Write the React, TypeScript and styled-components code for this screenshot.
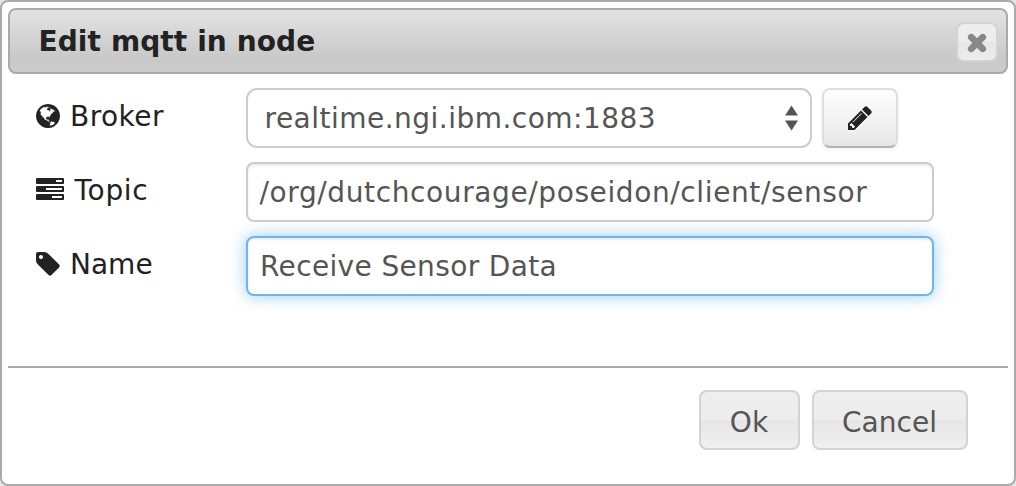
import React from "react";
import styled, { createGlobalStyle } from "styled-components";

const GlobalStyle = createGlobalStyle`
  *, *::before, *::after { box-sizing: border-box; }
  html, body { margin: 0; padding: 0; }
  body {
    background: #e6e6e6;
    font-family: Verdana, "DejaVu Sans", sans-serif;
    font-size: 28px;
    line-height: 36px;
    color: #222;
  }
`;

const Dialog = styled.section`
  width: 1016px;
  height: 486px;
  padding: 6px;
  border: 2px solid #aaa;
  border-radius: 8px;
  background: #fff;
  display: flex;
  flex-direction: column;
`;

const TitleBar = styled.header`
  height: 66px;
  flex: none;
  display: flex;
  align-items: center;
  justify-content: space-between;
  padding: 0 8px 0 28.5px;
  border: 2px solid #aaa;
  border-radius: 8px;
  background: linear-gradient(#e3e3e3 0%, #c9c9c9 76%, #cccccc 100%);
`;

const Title = styled.h1`
  margin: 0;
  padding-top: 2px;
  font-size: 28px;
  line-height: 36px;
  font-weight: bold;
  letter-spacing: 0.1px;
`;

const CloseButton = styled.button`
  width: 42px;
  height: 40px;
  margin-top: 2px;
  padding: 2px 0 0;
  display: flex;
  align-items: center;
  justify-content: center;
  border: 2px solid #d3d3d3;
  border-radius: 8px;
  background: linear-gradient(#ededed 0%, #ededed 50%, #e6e6e6 51%, #ececec 100%);
`;

const Form = styled.form`
  flex: none;
  height: 292px;
  padding: 14px 0 0 28px;
  display: flex;
  flex-direction: column;
  gap: 14px;
`;

const Row = styled.div`
  height: 60px;
  display: flex;
  align-items: stretch;
`;

const Label = styled.label`
  width: 210px;
  height: 56px;
  display: flex;
  align-items: center;
`;

const LabelText = styled.span<{ $gap: number; $spacing: number }>`
  margin-left: ${(p) => p.$gap}px;
  padding-top: 2px;
  letter-spacing: ${(p) => p.$spacing}px;
`;

const Field = styled.div<{ $focused?: boolean; $width: number; $radius?: number; $inset?: boolean }>`
  width: ${(p) => p.$width}px;
  display: flex;
  align-items: center;
  justify-content: space-between;
  padding: 0 12px 0 11px;
  color: #555;
  background: #fff;
  border: 2px solid ${(p) => (p.$focused ? "#6fb5f1" : "#ccc")};
  border-radius: ${(p) => p.$radius ?? 8}px;
  box-shadow: ${(p) =>
    p.$focused
      ? "inset 0 2px 2px rgba(0,0,0,0.075), 0 0 16px rgba(82,168,236,0.6)"
      : p.$inset
        ? "inset 0 2px 2px rgba(0,0,0,0.075)"
        : "none"};
`;

const Value = styled.span<{ $indent?: number; $spacing: number }>`
  margin-left: ${(p) => p.$indent ?? 0}px;
  padding-top: 2px;
  letter-spacing: ${(p) => p.$spacing}px;
  white-space: nowrap;
`;

const EditButton = styled.button`
  width: 76px;
  margin-left: 10px;
  padding: 0;
  display: flex;
  align-items: center;
  justify-content: center;
  border: 2px solid #dedede;
  border-bottom-color: #b3b3b3;
  border-radius: 8px;
  background: linear-gradient(#ffffff, #e6e6e6);
  box-shadow: 0 2px 4px rgba(0, 0, 0, 0.05);
`;

const ButtonPane = styled.footer`
  flex: 1;
  display: flex;
  justify-content: flex-end;
  align-items: flex-start;
  gap: 12px;
  padding: 22px 40px 0 0;
  border-top: 2px solid #aaa;
`;

const PaneButton = styled.button<{ $width: number }>`
  width: ${(p) => p.$width}px;
  height: 60px;
  padding: 5px 1px 0 0;
  font: inherit;
  color: #555;
  border: 2px solid #d3d3d3;
  border-radius: 8px;
  background: linear-gradient(#eeeeee 0%, #ededed 50%, #e6e6e6 51%, #f0f0f0 100%);
`;

const Glyph = styled.svg`
  display: block;
  flex: none;
  fill: currentColor;
`;

const PencilGlyph = styled(Glyph)`
  color: #222;
  filter: drop-shadow(0 2px 1px rgba(255, 255, 255, 0.75));
`;

const GlobeIcon = () => (
  <Glyph width="24" height="28" viewBox="128 0 1536 1792">
    <path d="M896 128q209 0 385.5 103t279.5 279.5 103 385.5-103 385.5-279.5 279.5-385.5 103-385.5-103-279.5-279.5-103-385.5 103-385.5 279.5-279.5 385.5-103zm274 521q-2 1-9.5 9.5t-13.5 9.5q2 0 4.5-5t5-11 3.5-7q6-7 22-15 14-6 52-12 34-8 51 11-2-2 9.5-13t14.5-12q3-2 15-4.5t15-7.5l2-22q-12 1-17.5-7t-6.5-21q0 2-6 8 0-7-4.5-8t-11.5 1-9 1q-10-3-15-7.5t-8-16.5-4-15q-2-5-9.5-11t-9.5-10q-1-2-2.5-5.5t-3-6.5-4-5.5-5.5-2.5-7 5-7.5 10-4.5 5q-3-2-6-1.5t-4.5 1-4.5 3-5 3.5q-3 2-8.5 3t-8.5 2q15-5-1-11-10-4-16-3 9-4 7.5-12t-8.5-14h5q-1-4-8.5-8.5t-17.5-8.5-13-6q-8-5-34-9.5t-33-.5q-5 6-4.5 10.5t4 14 3.5 12.5q1 6-5.5 13t-6.5 12q0 7 14 15.5t10 21.5q-3 8-16 16t-16 12q-5 8-1.5 18.5t10.5 16.5q2 2 1.5 4t-3.5 4.5-5.5 4-6.5 3.5l-3 2q-11 5-20.5-6t-13.5-26q-7-25-16-30-23-8-29 1-5-13-41-26-25-9-58-4 6-1 0-15-7-15-19-12 3-6 4-17.5t1-13.5q3-13 12-23 1-1 7-8.5t9.5-13.5.5-6q35 4 50-11 5-5 11.5-17t10.5-17q9-6 14-5.5t14.5 5.5 14.5 5q14 1 15.5-11t-7.5-20q12 1 3-17-4-7-8-9-12-4-27 5-8 4 2 8-1-1-9.5 10.5t-16.5 17.5-16-5q-1-1-5.5-13.5t-9.5-13.5q-8 0-16 15 3-8-11-15t-24-8q19-12-8-27-7-4-20.5-5t-19.5 4q-5 7-5.5 11.5t5 8 10.5 5.5 11.5 4 8.5 3q14 10 8 14-2 1-8.5 3.5t-11.5 4.5-6 4q-3 4 0 14t-2 14q-5-5-9-17.5t-7-16.5q7 9-25 6l-10-1q-4 0-16 2t-20.5 1-13.5-8q-4-8 0-20 1-4 4-2-4-3-11-9.5t-10-8.5q-46 15-94 41 6 1 12-1 5-2 13-6.5t10-5.5q34-14 42-7l5-5q14 16 20 25-7-4-30-1-20 6-22 12 7 12 5 18-4-3-11.5-10t-14.5-11-15-5q-16 0-22 1-146 80-235 222 7 7 12 8 4 1 5 9t2.5 11 11.5-3q9 8 3 19 1-1 44 27 19 17 21 21 3 11-10 18-1-2-9-9t-9-4q-3 5 .5 18.5t10.5 12.5q-7 0-9.5 16t-2.5 35.5-1 23.5l2 1q-3 12 5.5 34.5t21.5 19.5q-13 3 20 43 6 8 8 9 3 2 12 7.5t15 10 10 10.5q4 5 10 22.5t14 23.5q-2 6 9.5 20t10.5 23q-1 0-2.5 1t-2.5 1q3 7 15.5 14t15.5 13q1 3 2 10t3 11 8 2q2-20-24-62-15-25-17-29-3-5-5.5-15.5t-4.5-14.5q2 0 6 1.5t8.5 3.5 7.5 4 2 3q-3 7 2 17.5t12 18.5 17 19 12 13q6 6 14 19.5t0 13.5q9 0 20 10.5t17 19.5q5 8 8 26t5 24q2 7 8.5 13.5t12.5 9.5l16 8 13 7q5 2 18.5 10.5t21.5 11.5q10 4 16 4t14.5-2.5 13.5-3.5q15-2 29 15t21 21q36 19 55 11-2 1 .5 7.5t8 15.5 9 14.5 5.5 8.5q5 6 18 15t18 15q6-4 7-9-3 8 7 20t18 10q14-3 14-32-31 15-49-18 0-1-2.5-5.5t-4-8.5-2.5-8.5 0-7.5 5-3q9 0 10-3.5t-2-12.5-4-13q-1-8-11-20t-12-15q-5 9-16 8t-16-9q0 1-1.5 5.5t-1.5 6.5q-13 0-15-1 1-3 2.5-17.5t3.5-22.5q1-4 5.5-12t7.5-14.5 4-12.5-4.5-9.5-17.5-2.5q-19 1-26 20-1 3-3 10.5t-5 11.5-9 7q-7 3-24 2t-24-5q-13-8-22.5-29t-9.5-37q0-10 2.5-26.5t3-25-5.5-24.5q3-2 9-9.5t10-10.5q2-1 4.5-1.5t4.5 0 4-1.5 3-6q-1-1-4-3-3-3-4-3 7 3 28.5-1.5t27.5 1.5q15 11 22-2 0-1-2.5-9.5t-.5-13.5q5 27 29 9 3 3 15.5 5t17.5 5q3 2 7 5.5t5.5 4.5 5-.5 8.5-6.5q10 14 12 24 11 40 19 44 7 3 11 2t4.5-9.5 0-14-1.5-12.5l-1-8v-18l-1-8q-15-3-18.5-12t1.5-18.5 15-18.5q1-1 8-3.5t15.5-6.5 12.5-8q21-19 15-35 7 0 11-9-1 0-5-3t-7.5-5-4.5-2q9-5 2-16 5-3 7.5-11t7.5-10q9 12 21 2 7-8 1-16 5-7 20.5-10.5t18.5-9.5q7 2 8-2t1-12 3-12q4-5 15-9t13-5l17-11q3-4 0-4 18 2 31-11 10-11-6-20 3-6-3-9.5t-15-5.5q3-1 11.5-.5t10.5-1.5q15-10-7-16-17-5-43 12zm-163 877q206-36 351-189-3-3-12.5-4.5t-12.5-3.5q-18-7-24-8 1-7-2.5-13t-8-9-12.5-8-11-7q-2-2-7-6t-7-5.5-7.5-4.5-8.5-2-10 1l-3 1q-3 1-5.5 2.5t-5.5 3-4 3 0 2.5q-21-17-36-22-5-1-11-5.5t-10.5-7-10-1.5-11.5 7q-5 5-6 15t-2 13q-7-5 0-17.5t2-18.5q-3-6-10.5-4.5t-12 4.5-11.5 8.5-9 6.5-8.5 5.5-8.5 7.5q-3 4-6 12t-5 11q-2-4-11.5-6.5t-9.5-5.5q2 10 4 35t5 38q7 31-12 48-27 25-29 40-4 22 12 26 0 7-8 20.5t-7 21.5q0 6 2 16z" />
  </Glyph>
);

const TasksIcon = () => (
  <Glyph width="28" height="28" viewBox="0 0 1792 1792">
    <path d="M1024 1408h640v-128h-640v128zm-384-512h1024v-128h-1024v128zm640-512h384v-128h-384v128zm512 832v256q0 26-19 45t-45 19h-1664q-26 0-45-19t-19-45v-256q0-26 19-45t45-19h1664q26 0 45 19t19 45zm0-512v256q0 26-19 45t-45 19h-1664q-26 0-45-19t-19-45v-256q0-26 19-45t45-19h1664q26 0 45 19t19 45zm0-512v256q0 26-19 45t-45 19h-1664q-26 0-45-19t-19-45v-256q0-26 19-45t45-19h1664q26 0 45 19t19 45z" />
  </Glyph>
);

const TagIcon = () => (
  <Glyph width="24" height="28" viewBox="128 0 1536 1792">
    <path d="M576 448q0-53-37.5-90.5t-90.5-37.5-90.5 37.5-37.5 90.5 37.5 90.5 90.5 37.5 90.5-37.5 37.5-90.5zm1067 576q0 53-37 90l-491 492q-39 37-91 37-53 0-90-37l-715-716q-38-37-64.5-101t-26.5-117v-416q0-52 38-90t90-38h416q53 0 117 26.5t102 64.5l715 714q37 39 37 91z" />
  </Glyph>
);

const PencilIcon = () => (
  <PencilGlyph width="28" height="28" viewBox="0 0 1792 1792">
    <path d="M491 1536l91-91-235-235-91 91v107h128v128h107zm523-928q0-22-22-22-10 0-17 7l-542 542q-7 7-7 17 0 22 22 22 10 0 17-7l542-542q7-7 7-17zm-54-192l416 416-832 832h-416v-416zm683 96q0 53-37 90l-166 166-416-416 166-165q36-38 90-38 53 0 91 38l235 234q37 39 37 91z" />
  </PencilGlyph>
);

const CloseIcon = () => (
  <Glyph width="20" height="20" viewBox="0 0 20 20">
    <path d="M4.2 4.2L15.8 15.8M15.8 4.2L4.2 15.8" fill="none" stroke="#888" strokeWidth="6.6" strokeLinecap="round" />
  </Glyph>
);

const SelectArrows = () => (
  <Glyph width="13" height="26" viewBox="0 0 13 26">
    <path d="M6.5 0.5L13 10.5H0ZM0 15.5H13L6.5 25.5Z" />
  </Glyph>
);

export default function App() {
  return (
    <>
      <GlobalStyle />
      <Dialog>
        <TitleBar>
          <Title>Edit mqtt in node</Title>
          <CloseButton type="button" aria-label="Close">
            <CloseIcon />
          </CloseButton>
        </TitleBar>
        <Form>
          <Row>
            <Label>
              <GlobeIcon />
              <LabelText $gap={10} $spacing={0.45}>Broker</LabelText>
            </Label>
            <Field $width={566} $radius={11}>
              <Value $indent={5.5} $spacing={0.48}>realtime.ngi.ibm.com:1883</Value>
              <SelectArrows />
            </Field>
            <EditButton type="button" aria-label="Edit broker">
              <PencilIcon />
            </EditButton>
          </Row>
          <Row>
            <Label>
              <TasksIcon />
              <LabelText $gap={10.5} $spacing={0.7}>Topic</LabelText>
            </Label>
            <Field $width={688} $inset>
              <Value $indent={0.5} $spacing={0.61}>/org/dutchcourage/poseidon/client/sensor</Value>
            </Field>
          </Row>
          <Row>
            <Label>
              <TagIcon />
              <LabelText $gap={10} $spacing={0}>Name</LabelText>
            </Label>
            <Field $width={688} $focused>
              <Value $indent={1} $spacing={0.36}>Receive Sensor Data</Value>
            </Field>
          </Row>
        </Form>
        <ButtonPane>
          <PaneButton type="button" $width={101}>Ok</PaneButton>
          <PaneButton type="button" $width={156}>Cancel</PaneButton>
        </ButtonPane>
      </Dialog>
    </>
  );
}
